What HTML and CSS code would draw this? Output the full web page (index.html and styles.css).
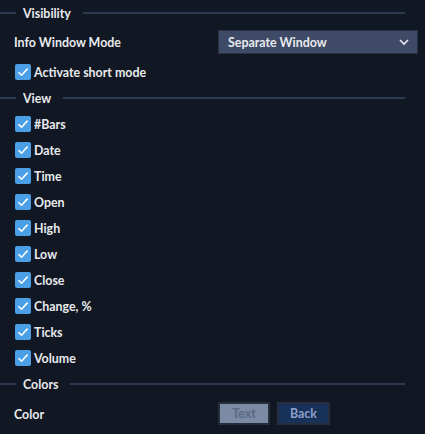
FILE: index.html
```html
<!DOCTYPE html>
<html>
<head>
<meta charset="utf-8">
<link rel="stylesheet" href="styles.css">
</head>
<body>
<div class="panel">
  <div class="legend"><span class="line-l"></span><span class="legend-text">Visibility</span><span class="line-r"></span></div>
  <div class="row field">
    <span class="label">Info Window Mode</span>
    <div class="select"><span>Separate Window</span>
      <svg class="chev" width="10" height="7" viewBox="0 0 10 7"><path d="M1 1 L5 5 L9 1" fill="none" stroke="#e6e9f0" stroke-width="1.6"/></svg>
    </div>
  </div>
  <div class="check short"><span class="box"><svg width="16" height="16" viewBox="0 0 16 16"><path d="M3.5 8.2 L6.6 11.2 L12.6 4.6" fill="none" stroke="#fff" stroke-width="1.6"/></svg></span><span>Activate short mode</span></div>

  <div class="legend"><span class="line-l"></span><span class="legend-text">View</span><span class="line-r"></span></div>
  <div class="check"><span class="box"><svg width="16" height="16" viewBox="0 0 16 16"><path d="M3.5 8.2 L6.6 11.2 L12.6 4.6" fill="none" stroke="#fff" stroke-width="1.6"/></svg></span><span>#Bars</span></div>
  <div class="check"><span class="box"><svg width="16" height="16" viewBox="0 0 16 16"><path d="M3.5 8.2 L6.6 11.2 L12.6 4.6" fill="none" stroke="#fff" stroke-width="1.6"/></svg></span><span>Date</span></div>
  <div class="check"><span class="box"><svg width="16" height="16" viewBox="0 0 16 16"><path d="M3.5 8.2 L6.6 11.2 L12.6 4.6" fill="none" stroke="#fff" stroke-width="1.6"/></svg></span><span>Time</span></div>
  <div class="check"><span class="box"><svg width="16" height="16" viewBox="0 0 16 16"><path d="M3.5 8.2 L6.6 11.2 L12.6 4.6" fill="none" stroke="#fff" stroke-width="1.6"/></svg></span><span>Open</span></div>
  <div class="check"><span class="box"><svg width="16" height="16" viewBox="0 0 16 16"><path d="M3.5 8.2 L6.6 11.2 L12.6 4.6" fill="none" stroke="#fff" stroke-width="1.6"/></svg></span><span>High</span></div>
  <div class="check"><span class="box"><svg width="16" height="16" viewBox="0 0 16 16"><path d="M3.5 8.2 L6.6 11.2 L12.6 4.6" fill="none" stroke="#fff" stroke-width="1.6"/></svg></span><span>Low</span></div>
  <div class="check"><span class="box"><svg width="16" height="16" viewBox="0 0 16 16"><path d="M3.5 8.2 L6.6 11.2 L12.6 4.6" fill="none" stroke="#fff" stroke-width="1.6"/></svg></span><span>Close</span></div>
  <div class="check"><span class="box"><svg width="16" height="16" viewBox="0 0 16 16"><path d="M3.5 8.2 L6.6 11.2 L12.6 4.6" fill="none" stroke="#fff" stroke-width="1.6"/></svg></span><span>Change, %</span></div>
  <div class="check"><span class="box"><svg width="16" height="16" viewBox="0 0 16 16"><path d="M3.5 8.2 L6.6 11.2 L12.6 4.6" fill="none" stroke="#fff" stroke-width="1.6"/></svg></span><span>Ticks</span></div>
  <div class="check"><span class="box"><svg width="16" height="16" viewBox="0 0 16 16"><path d="M3.5 8.2 L6.6 11.2 L12.6 4.6" fill="none" stroke="#fff" stroke-width="1.6"/></svg></span><span>Volume</span></div>

  <div class="legend"><span class="line-l"></span><span class="legend-text">Colors</span><span class="line-r"></span></div>
  <div class="row colors">
    <span class="label">Color</span>
    <div class="buttons">
      <span class="btn btn-text">Text</span>
      <span class="btn btn-back">Back</span>
    </div>
  </div>
</div>
</body>
</html>
```

FILE: styles.css
```css
html, body {
  margin: 0;
  padding: 0;
  background: #111823;
}
body {
  width: 425px;
  height: 434px;
  overflow: hidden;
  font-family: Lato, "Open Sans", sans-serif;
  font-weight: 700;
  font-size: 12.4px;
  color: #e8eaee;
}
.panel {
  display: flex;
  flex-direction: column;
}
.legend {
  height: 26px;
  display: flex;
  align-items: center;
  padding-right: 20px;
}
.line-l {
  width: 16px;
  height: 2px;
  background: #2b3a50;
}
.line-r {
  flex: 1;
  height: 2px;
  background: #2b3a50;
}
.legend-text {
  padding: 1px 12px 0 7px;
  line-height: 14px;
}
.row {
  display: flex;
  align-items: center;
  padding-left: 14px;
}
.field {
  margin-top: 4px;
  height: 24px;
}
.label {
  width: 204px;
  padding-top: 1px;
}
.select {
  height: 22px;
  background: #3e4a66;
  border: 1px solid #2a3246;
  display: flex;
  align-items: center;
  justify-content: space-between;
  padding-left: 9px;
  padding-right: 8px;
  box-sizing: content-box;
  width: 181px;
}
.select span {
  padding-top: 1px;
}
.chev {
  display: block;
}
.check {
  height: 26px;
  display: flex;
  align-items: center;
  padding-left: 15px;
  gap: 3px;
}
.check span:last-child {
  padding-top: 1px;
}
.short {
  margin-top: 5px;
}
.box {
  width: 16px;
  height: 16px;
  background: #4a9fe6;
  border-radius: 2px;
  display: block;
}
.box svg {
  display: block;
}
.colors {
  margin-top: 5px;
  height: 23px;
}
.buttons {
  display: flex;
  gap: 7px;
}
.btn {
  height: 23px;
  box-sizing: border-box;
  border: 2px solid #262e3e;
  display: flex;
  align-items: center;
  justify-content: center;
}
.btn-text {
  width: 52px;
  background: #7b8ba3;
  color: #5a6a84;
}
.btn-back {
  width: 53px;
  background: #173159;
  color: #8e9fcb;
}
```
